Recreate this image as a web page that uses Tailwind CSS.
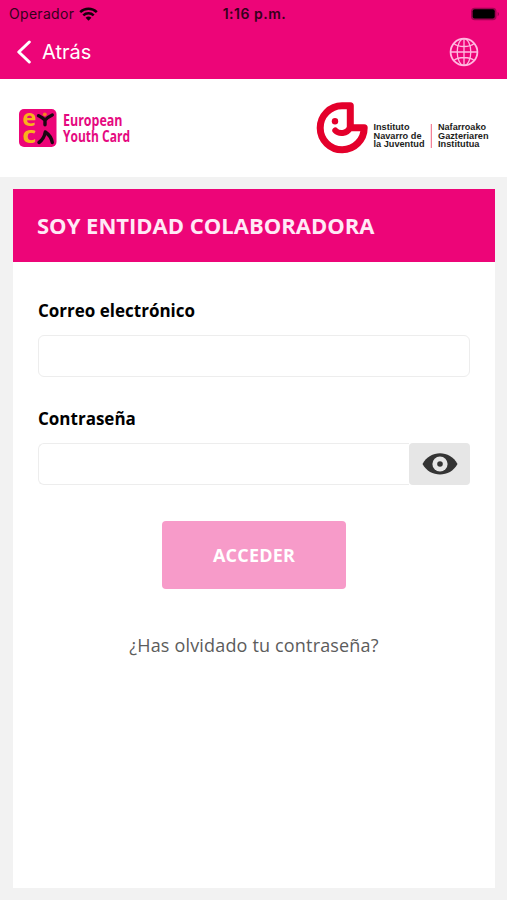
<!DOCTYPE html>
<html lang="es">
<head>
    <meta charset="UTF-8">
    <meta name="viewport" content="width=device-width, initial-scale=1.0">
    <title>Soy entidad colaboradora</title>
    <script src="https://cdn.jsdelivr.net/npm/@tailwindcss/browser@4"></script>
</head>
<body class="bg-[#f2f2f2] h-screen flex flex-col overflow-hidden font-['Open_Sans',sans-serif]">
    <header class="bg-[#ed0578] h-[79px] shrink-0 font-['Inter',sans-serif]">
        <!-- Barra de estado -->
        <div class="h-[27px] grid grid-cols-3 items-center pl-[9px] pr-[7px] text-[#35001b]">
            <div class="flex items-center gap-[5px]">
                <span class="text-[14px] tracking-[0.3px]">Operador</span>
                <svg class="w-[19px] h-[14px]" viewBox="0 0 19 14" fill="none" stroke="#16000b" stroke-width="2.5">
                    <path d="M1.2 5.1a11.8 11.8 0 0 1 16.6 0M4.3 8.4a7.4 7.4 0 0 1 10.4 0"/>
                    <path d="M9.5 13.7 6.6 10.8a4.2 4.2 0 0 1 5.8 0z" fill="#16000b" stroke="none"/>
                </svg>
            </div>
            <span class="text-center text-[14px] tracking-[0.5px] font-semibold whitespace-nowrap">1:16 p.m.</span>
            <svg class="w-[30px] h-[14px] justify-self-end" viewBox="0 0 30 14">
                <rect x="1" y=".7" width="25.5" height="12.6" rx="3.8" fill="#a00352"/>
                <rect x="2.7" y="2.3" width="22" height="9.2" rx="2" fill="#000"/>
                <path d="M27.6 5v4.2c1.9-.7 1.9-3.5 0-4.2z" fill="#a00352"/>
            </svg>
        </div>
        <div class="h-[50px] flex items-center justify-between pl-4 pr-[28px]">
            <a href="#" class="flex items-center gap-[10px] text-white">
                <svg class="w-4 h-6" viewBox="0 0 16 24" fill="none" stroke="#fff" stroke-width="3" stroke-linecap="round" stroke-linejoin="round">
                    <path d="M13.3 2 2.8 12l10.5 10"/>
                </svg>
                <span class="text-[20px]">Atrás</span>
            </a>
            <svg class="w-[30px] h-[30px]" viewBox="0 0 30 30" fill="none" stroke="#ffb9e0" stroke-width="1.3">
                <circle cx="15" cy="15" r="13.4" stroke-width="1.8"/>
                <ellipse cx="15" cy="15" rx="6.8" ry="13.4"/>
                <path d="M15 1.5v27M1.5 15h27M4.8 6.5c5 4 15.4 4 20.4 0M4.8 23.5c5-4 15.4-4 20.4 0"/>
            </svg>
        </div>
    </header>

    <!-- Logos -->
    <div class="bg-white h-[98px] shrink-0 flex items-center justify-between pl-[18px] pr-[17px]">
        <svg class="w-[114px] h-[40px] overflow-visible" viewBox="0 0 114 40">
            <rect x="1" y="1" width="37.5" height="38" rx="5" fill="#ed0578"/>
            <g fill="#f9b21b" font-family="Open Sans, sans-serif" font-size="23" font-weight="700">
                <text x="4.3" y="18.3" textLength="14" lengthAdjust="spacingAndGlyphs">e</text>
                <text x="4.3" y="35" textLength="14" lengthAdjust="spacingAndGlyphs">c</text>
            </g>
            <g fill="none" stroke="#1b0712" stroke-width="3.4" stroke-linecap="round" stroke-linejoin="round">
                <path d="M20.5 7.7C23 9 25 10 27 12.200 29 10 31 8.500 34.300 7M27 12.200v4.600"/>
                <path d="M21 34.500C24.500 32 26.500 28.500 27.300 24 31 26.500 33.500 30 34.300 34.500"/>
            </g>
            <circle cx="26.800" cy="6.300" r="1.900" fill="#f58220"/>
            <g fill="#e5097f" font-family="Open Sans, sans-serif" font-size="15.500" font-weight="700">
                <text x="45" y="18" textLength="59.500" lengthAdjust="spacingAndGlyphs">European</text>
                <text x="45" y="34" textLength="67" lengthAdjust="spacingAndGlyphs">Youth Card</text>
            </g>
        </svg>
        <svg class="w-[175px] h-[54px] overflow-visible" viewBox="0 0 175 54">
            <g fill="none" stroke="#e4002b" stroke-linecap="round" stroke-linejoin="round">
                <path d="M49.200 26.800H35.300V4.800H27A22 22 0 1 0 49.200 26.800z" stroke-width="7"/>
                <path d="M20.300 29.500C23.500 33 32 33.500 35 26.500" stroke-width="6"/>
            </g>
            <circle cx="20" cy="20.200" r="3.200" fill="#e4002b"/>
            <path d="M116.300 23v24" stroke="#f0627f" stroke-width="1"/>
            <g fill="#1d1d1b" font-family="Liberation Sans, sans-serif" font-size="8.500" font-weight="700">
                <text x="58.500" y="29" textLength="36" lengthAdjust="spacingAndGlyphs">Instituto</text>
                <text x="58.500" y="37.500" textLength="48" lengthAdjust="spacingAndGlyphs">Navarro de</text>
                <text x="58.500" y="46" textLength="51" lengthAdjust="spacingAndGlyphs">la Juventud</text>
                <text x="123" y="29" textLength="48" lengthAdjust="spacingAndGlyphs">Nafarroako</text>
                <text x="123" y="37.500" textLength="50.500" lengthAdjust="spacingAndGlyphs">Gazteriaren</text>
                <text x="123" y="46" textLength="41.500" lengthAdjust="spacingAndGlyphs">Institutua</text>
            </g>
        </svg>
    </div>

    <main class="bg-white flex-1 mt-3 mb-3 ml-[13px] mr-[12px]">
        <h1 class="bg-[#ed0578] h-[73px] flex items-center pl-[24px] pb-px text-[#ffe9f6] text-[22px] font-bold whitespace-nowrap">SOY ENTIDAD COLABORADORA</h1>
        <form class="flex flex-col px-[25px] pt-[37px]">
            <label for="email" class="text-[17px] leading-6 font-bold text-black">Correo electrónico</label>
            <input id="email" type="email" class="mt-3 h-[42px] w-full rounded-md border border-[#ededed] bg-white px-3">
            <label for="password" class="mt-[30px] text-[17px] leading-6 font-bold text-black">Contraseña</label>
            <div class="mt-3 h-[42px] flex">
                <input id="password" type="password" class="flex-1 min-w-0 rounded-l-md border border-r-0 border-[#ededed] bg-white px-3">
                <button type="button" class="w-[61px] rounded bg-[#e6e6e6] flex items-center justify-center">
                    <svg class="w-9 h-6" viewBox="0 0 36 24">
                        <path d="M.5 12C8-2.500 28-2.500 35.500 12 28 26 8 26 .5 12z" fill="#343434"/>
                        <circle cx="18" cy="12" r="7.600" fill="#e6e6e6"/>
                        <circle cx="18" cy="12" r="2.800" fill="#343434"/>
                    </svg>
                </button>
            </div>
            <button type="submit" class="mt-9 h-[68px] w-[184px] self-center rounded bg-[#f79bc9] text-[18px] tracking-[0.2px] font-bold text-white">ACCEDER</button>
            <a href="#" class="mt-[42px] self-center text-[18px] tracking-[0.17px] leading-7 text-[#5c5c5c] whitespace-nowrap">¿Has olvidado tu contraseña?</a>
        </form>
    </main>
</body>
</html>
